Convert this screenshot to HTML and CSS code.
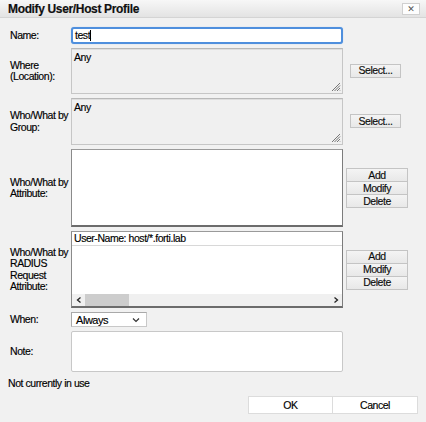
FILE: index.html
```html
<!DOCTYPE html>
<html>
<head>
<meta charset="utf-8">
<link rel="stylesheet" href="styles.css">
</head>
<body>
<div class="dialog">
  <div class="titlebar">
    <span class="title">Modify User/Host Profile</span>
    <span class="close">✕</span>
  </div>
  <div class="form">
    <div class="lbl">Name:</div>
    <div class="field name-input">test<span class="caret"></span></div>
    <div class="side"></div>

    <div class="lbl">Where<br>(Location):</div>
    <div class="field ro-area h46">Any
      <svg class="grip" width="10" height="10" viewBox="0 0 10 10"><path d="M9 1L1 9M9 3.5L3.5 9M9 6L6 9M9 8.5L8.5 9" stroke="#777" stroke-width="1" fill="none"/></svg>
    </div>
    <div class="side"><span class="btn select">Select...</span></div>

    <div class="lbl">Who/What by<br>Group:</div>
    <div class="field ro-area h47">Any
      <svg class="grip" width="10" height="10" viewBox="0 0 10 10"><path d="M9 1L1 9M9 3.5L3.5 9M9 6L6 9M9 8.5L8.5 9" stroke="#777" stroke-width="1" fill="none"/></svg>
    </div>
    <div class="side"><span class="btn select">Select...</span></div>

    <div class="lbl">Who/What by<br>Attribute:</div>
    <div class="field list h78"></div>
    <div class="side"><div class="stack"><span class="btn sbtn">Add</span><span class="btn sbtn">Modify</span><span class="btn sbtn">Delete</span></div></div>

    <div class="lbl">Who/What by<br>RADIUS<br>Request<br>Attribute:</div>
    <div class="field list h77 radius">
      <div class="row">User-Name: host/*.forti.lab</div>
      <div class="rest"></div>
      <div class="hscroll">
        <svg class="arr" width="8" height="8" viewBox="0 0 8 8"><path d="M5.5 1.5L2.5 4L5.5 6.5" stroke="#222" stroke-width="1.3" fill="none"/></svg>
        <div class="thumb"></div>
        <div class="track"></div>
        <svg class="arr" width="8" height="8" viewBox="0 0 8 8"><path d="M2.5 1.5L5.5 4L2.5 6.5" stroke="#222" stroke-width="1.3" fill="none"/></svg>
      </div>
    </div>
    <div class="side"><div class="stack"><span class="btn sbtn">Add</span><span class="btn sbtn">Modify</span><span class="btn sbtn">Delete</span></div></div>

    <div class="lbl">When:</div>
    <div class="field-left"><div class="dropdown">Always<svg width="8" height="6" viewBox="0 0 8 6"><path d="M1 1.5L4 4.5L7 1.5" stroke="#333" stroke-width="1.2" fill="none"/></svg></div></div>
    <div class="side"></div>

    <div class="lbl">Note:</div>
    <div class="field note h41"></div>
    <div class="side"></div>
  </div>
  <div class="status">Not currently in use</div>
  <div class="actions">
    <span class="abtn">OK</span><span class="abtn">Cancel</span>
  </div>
</div>
</body>
</html>
```

FILE: styles.css
```css
html, body {
  margin: 0;
  padding: 0;
  background: #f1f1f1;
}
.dialog {
  width: 426px;
  height: 422px;
  font-family: "Liberation Sans", Arial, sans-serif;
  font-size: 10.5px;
  letter-spacing: -0.45px;
  color: #000;
  -webkit-text-stroke: 0.15px #000;
  background: #f1f1f1;
}
.titlebar {
  height: 17px;
  display: flex;
  align-items: center;
  justify-content: space-between;
  padding: 0 6px 0 8px;
  background: linear-gradient(#f7f7f7, #e3e3e3);
  border-bottom: 1px solid #d4d4d4;
}
.title {
  font-weight: bold;
  font-size: 12px;
  letter-spacing: -0.35px;
  color: #111;
}
.close {
  width: 18px;
  height: 12px;
  box-sizing: border-box;
  border: 1px solid #d0d0d0;
  background: #fdfdfd;
  font-size: 9px;
  line-height: 10px;
  text-align: center;
  color: #555;
  font-weight: bold;
  letter-spacing: 0;
  -webkit-text-stroke: 0;
  font-family: "DejaVu Sans", sans-serif;
}
.form {
  display: grid;
  grid-template-columns: 61px 272px 83px;
  row-gap: 4px;
  padding: 9px 0 0 10px;
}
.lbl {
  align-self: center;
  line-height: 11.3px;
  white-space: nowrap;
}
.field {
  box-sizing: border-box;
  position: relative;
}
.name-input {
  height: 17px;
  border: 2px solid #4f8fdd;
  border-radius: 3px;
  background: #fff;
  padding: 0 2px;
  line-height: 13px;
  box-shadow: 0 0 1px #9cc3f0;
}
.caret {
  display: inline-block;
  width: 1px;
  height: 11px;
  background: #000;
  vertical-align: -2px;
}
.ro-area {
  background: #f0f0f0;
  border: 1px solid #c6c6c6;
  border-top-color: #b8b8b8;
  box-shadow: inset 0 1px 0 #dedede;
  padding: 3px 2px;
  line-height: 11px;
}
.grip {
  position: absolute;
  right: 1px;
  bottom: 1px;
}
.h46 { height: 46px; }
.h47 { height: 47px; }
.h78 { height: 78px; }
.h77 { height: 77px; }
.h41 { height: 41px; }
.list {
  background: #fff;
  border: 1px solid #7c7c7c;
  border-top-color: #9a9a9a;
  border-left-color: #8a8a8a;
  border-bottom-width: 2px;
  border-bottom-color: #6c6c6c;
}
.radius {
  display: flex;
  flex-direction: column;
}
.row {
  height: 13px;
  line-height: 13px;
  padding-left: 2px;
  border-bottom: 1px solid #d8d8d8;
}
.rest {
  flex: 1;
}
.hscroll {
  height: 12px;
  display: flex;
  align-items: center;
  background: #f0f0f0;
}
.arr {
  width: 12px;
  flex: none;
  margin-left: 1px;
}
.hscroll .thumb {
  width: 44px;
  height: 12px;
  background: #cdcdcd;
}
.hscroll .track {
  flex: 1;
}
.side {
  display: flex;
  align-items: center;
}
.btn {
  box-sizing: border-box;
  display: flex;
  align-items: center;
  justify-content: center;
  background: linear-gradient(#f4f4f4, #e8e8e8);
  border: 1px solid #c4c4c4;
  color: #111;
  line-height: 11px;
}
.select {
  width: 51px;
  height: 14px;
  margin-left: 7px;
  margin-top: -1px;
}
.stack {
  margin-left: 3px;
  display: flex;
  flex-direction: column;
}
.sbtn {
  width: 62px;
  height: 14px;
}
.sbtn + .sbtn {
  margin-top: -1px;
}
.field-left {
  display: flex;
}
.dropdown {
  box-sizing: border-box;
  width: 76px;
  height: 15px;
  background: #fff;
  border: 1px solid #a9a9a9;
  border-right-color: #c8c8c8;
  border-bottom-color: #c8c8c8;
  display: flex;
  align-items: center;
  justify-content: space-between;
  padding: 0 6px 0 4px;
  font-size: 11px;
}
.note {
  background: #fff;
  border: 1px solid #c8c8c8;
  border-radius: 2px;
}
.status {
  margin-top: 5px;
  padding-left: 8px;
  height: 12px;
  line-height: 12px;
}
.actions {
  margin-top: 7px;
  display: flex;
  justify-content: flex-end;
  padding-right: 8px;
}
.abtn {
  box-sizing: border-box;
  width: 85px;
  height: 18px;
  display: flex;
  align-items: center;
  justify-content: center;
  background: #fff;
  border: 1px solid #dcdcdc;
}
.abtn + .abtn {
  margin-left: -1px;
  width: 86px;
}
```
